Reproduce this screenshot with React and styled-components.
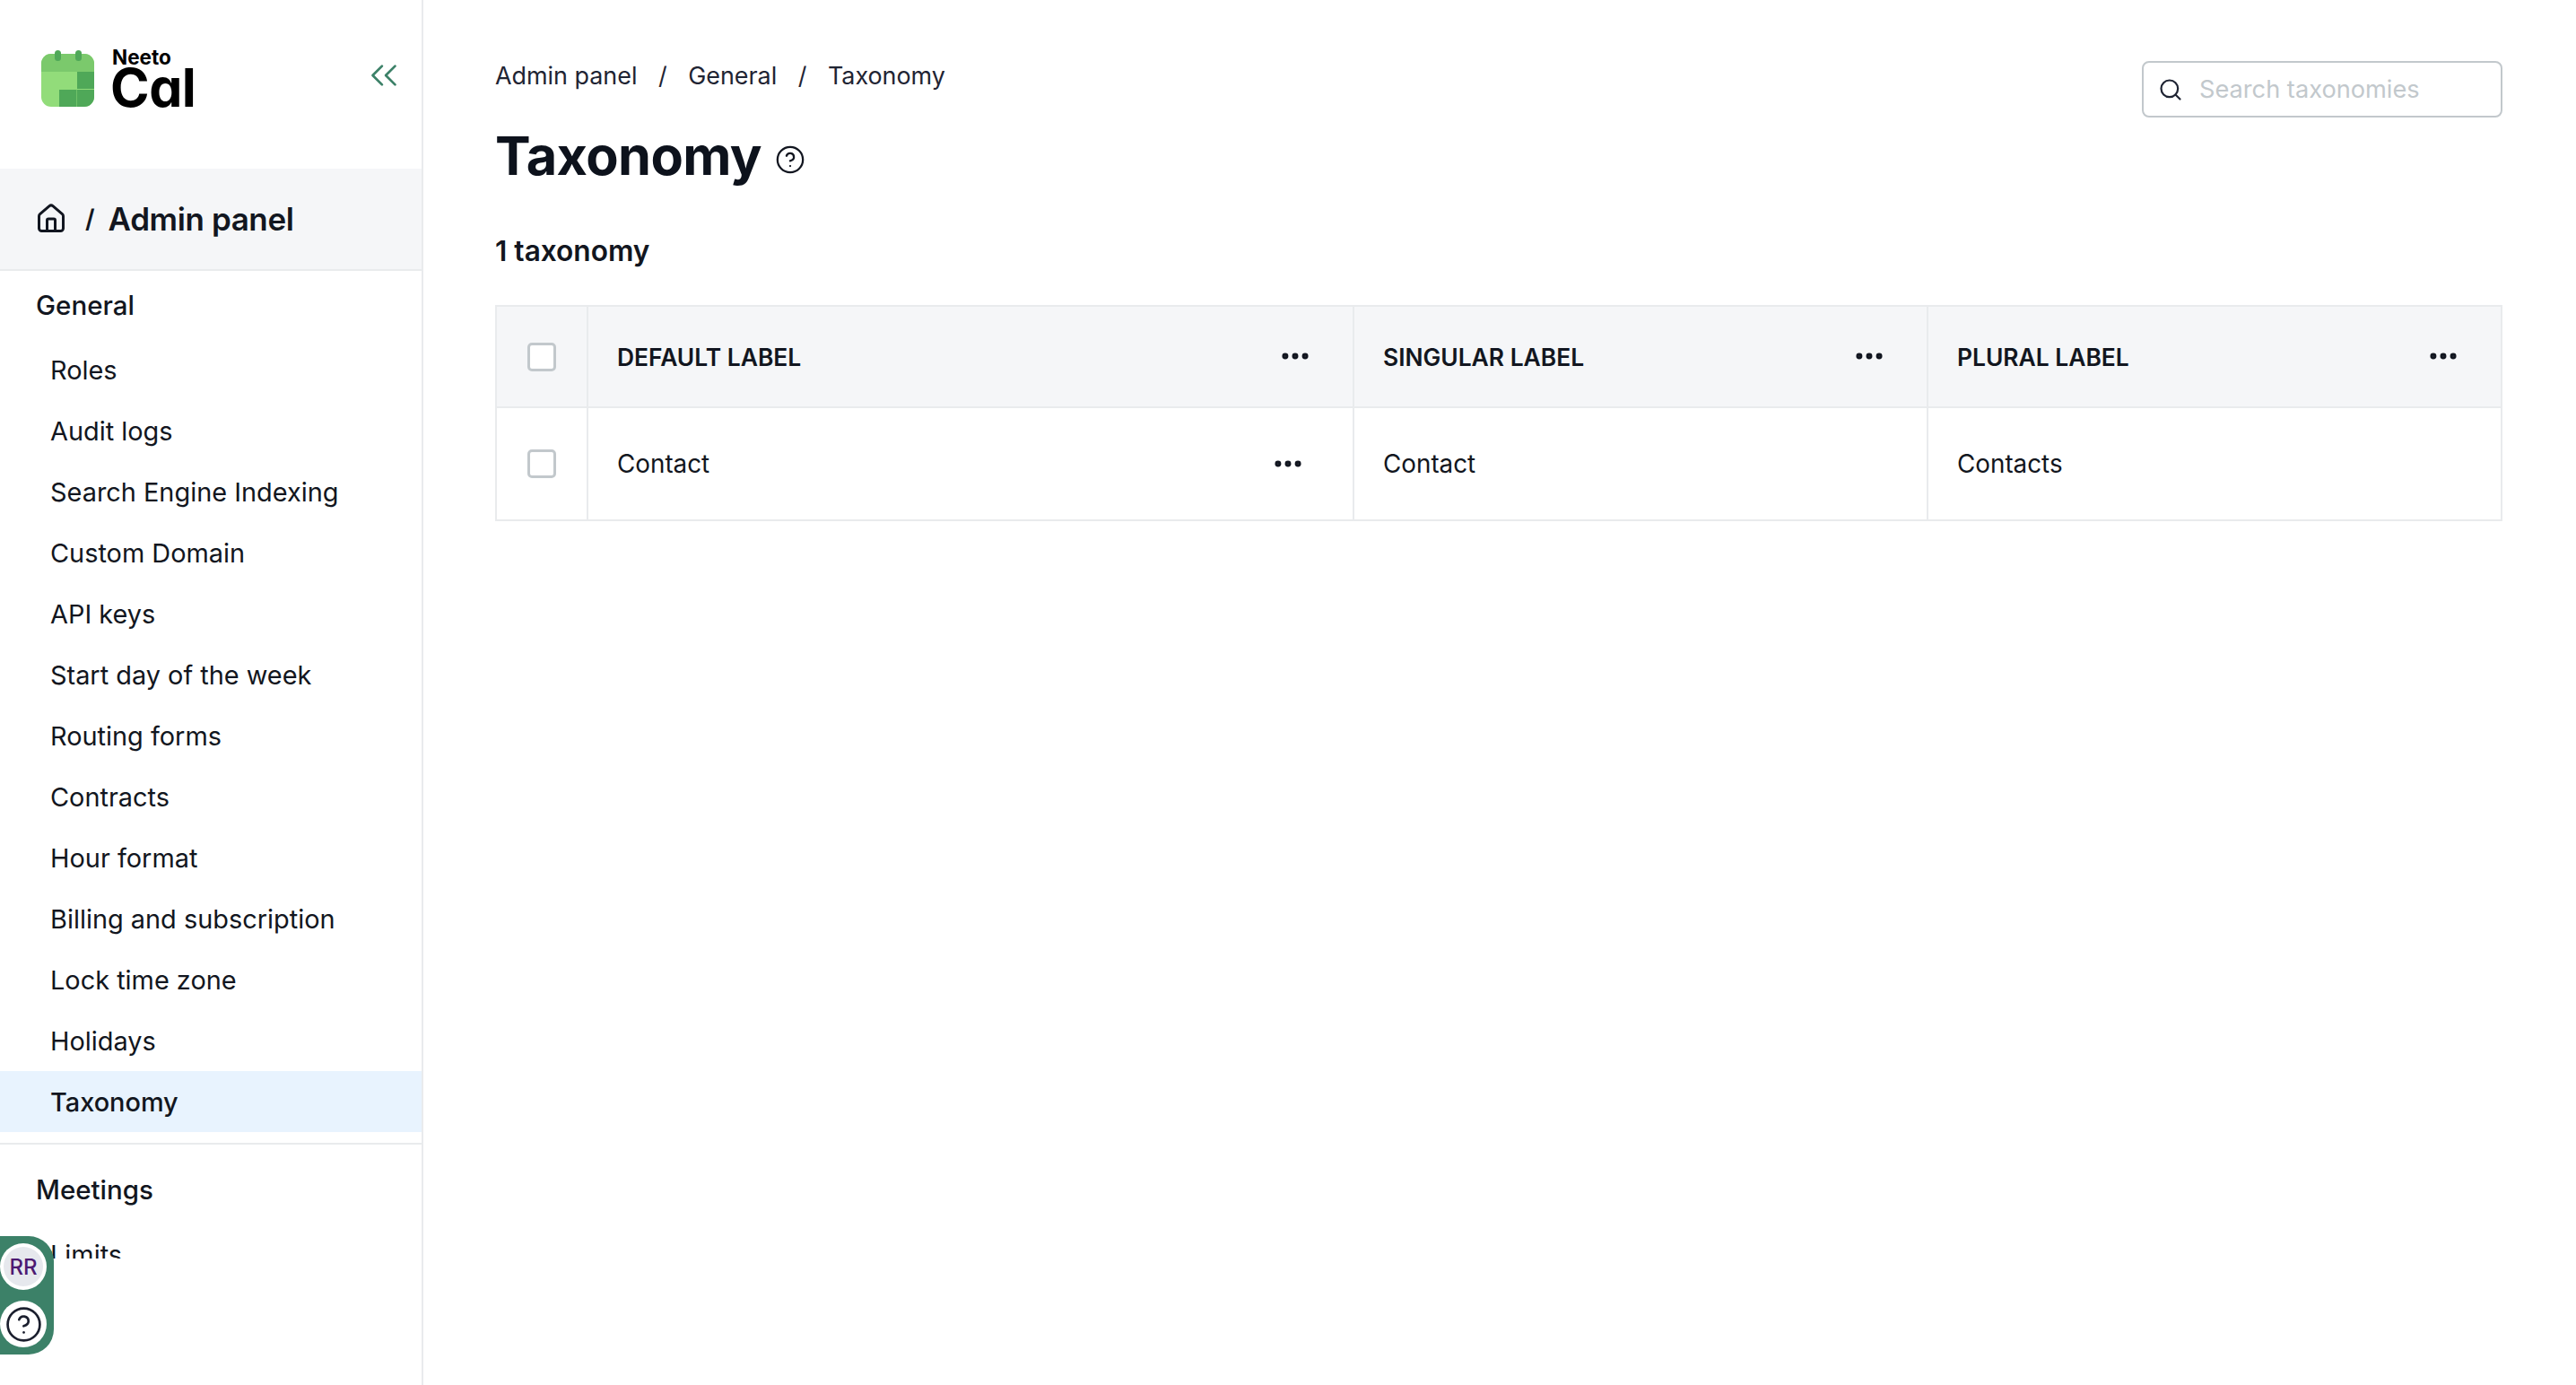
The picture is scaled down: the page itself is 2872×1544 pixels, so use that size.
import React from 'react';
import styled, { createGlobalStyle } from 'styled-components';
import { ChevronsLeft, CircleHelp, Ellipsis, House, Search } from 'lucide-react';

const GlobalStyle = createGlobalStyle`
  html, body {
    margin: 0;
    padding: 0;
    background: #fff;
  }
  * {
    box-sizing: border-box;
  }
  body {
    font-family: Inter, "Liberation Sans", sans-serif;
    color: #121620;
  }
`;

const generalItems = [
  'Roles',
  'Audit logs',
  'Search Engine Indexing',
  'Custom Domain',
  'API keys',
  'Start day of the week',
  'Routing forms',
  'Contracts',
  'Hour format',
  'Billing and subscription',
  'Lock time zone',
  'Holidays',
  'Taxonomy',
];

const Logo = () => (
  <LogoWrap>
    <svg width="59" height="63" viewBox="0 0 59 63">
      <defs>
        <clipPath id="calBody">
          <rect x="0" y="4" width="59" height="59" rx="11" />
        </clipPath>
      </defs>
      <g clipPath="url(#calBody)">
        <rect x="0" y="4" width="59" height="59" fill="#92dc7a" />
        <rect x="0" y="4" width="59" height="20" fill="#7bc96c" />
        <rect x="40" y="24" width="19" height="19" fill="#4fa858" />
        <rect x="20" y="44" width="19.5" height="19" fill="#4fa858" />
        <rect x="40" y="44" width="19" height="19" fill="#4fa858" />
      </g>
      <rect x="15" y="0" width="7" height="12" rx="3.5" fill="#4fa858" />
      <rect x="38" y="0" width="7" height="12" rx="3.5" fill="#4fa858" />
    </svg>
    <LogoText>
      <LogoSmall>Neeto</LogoSmall>
      <LogoBig>Cal</LogoBig>
    </LogoText>
  </LogoWrap>
);

const App = () => {
  return (
    <Page>
      <GlobalStyle />
      <Sidebar>
        <SideTop>
          <Logo />
          <Collapse>
            <ChevronsLeft size={50} strokeWidth={1.3} />
          </Collapse>
        </SideTop>
        <PanelBand>
          <House size={36} strokeWidth={2} />
          <Slash>/</Slash>
          <PanelTitle>Admin panel</PanelTitle>
        </PanelBand>
        <Menu>
          <SectionTitle>General</SectionTitle>
          {generalItems.map((item) => (
            <MenuItem key={item} $active={item === 'Taxonomy'}>
              {item}
            </MenuItem>
          ))}
          <Divider />
          <SectionTitle $second>Meetings</SectionTitle>
          <MenuItem>Limits</MenuItem>
        </Menu>
        <FloatPill>
          <Avatar>
            <AvatarInner>RR</AvatarInner>
          </Avatar>
          <Avatar>
            <CircleHelp size={43} strokeWidth={1.5} color="#1b1f2e" />
          </Avatar>
        </FloatPill>
      </Sidebar>
      <Main>
        <Header>
          <div>
            <Crumbs>
              <span>Admin panel</span>
              <CrumbSlash>/</CrumbSlash>
              <span>General</span>
              <CrumbSlash>/</CrumbSlash>
              <span>Taxonomy</span>
            </Crumbs>
            <TitleRow>
              <Title>Taxonomy</Title>
              <TitleHelp>
                <CircleHelp size={34} strokeWidth={1.6} />
              </TitleHelp>
            </TitleRow>
          </div>
          <SearchBox>
            <Search size={28} strokeWidth={1.9} color="#1f2433" />
            <SearchInput placeholder="Search taxonomies" readOnly />
          </SearchBox>
        </Header>
        <Count>1 taxonomy</Count>
        <Table>
          <HeadCell $check>
            <Checkbox />
          </HeadCell>
          <HeadCell>
            DEFAULT LABEL
            <Ellipsis size={38} strokeWidth={2.4} />
          </HeadCell>
          <HeadCell>
            SINGULAR LABEL
            <Ellipsis size={38} strokeWidth={2.4} />
          </HeadCell>
          <HeadCell>
            PLURAL LABEL
            <Ellipsis size={38} strokeWidth={2.4} />
          </HeadCell>
          <Cell $check>
            <Checkbox />
          </Cell>
          <Cell $menu>
            Contact
            <Ellipsis size={38} strokeWidth={2.4} />
          </Cell>
          <Cell>Contact</Cell>
          <Cell>Contacts</Cell>
        </Table>
      </Main>
    </Page>
  );
};

const Page = styled.div`
  display: flex;
  width: 2872px;
  height: 1544px;
  overflow: hidden;
`;

const Sidebar = styled.aside`
  position: relative;
  flex: 0 0 472px;
  height: 100%;
  border-right: 2px solid #e9ebed;
  display: flex;
  flex-direction: column;
`;

const SideTop = styled.div`
  height: 188px;
  padding: 56px 17px 0 46px;
  display: flex;
  align-items: flex-start;
  justify-content: space-between;
`;

const LogoWrap = styled.div`
  display: flex;
  gap: 20px;
`;

const LogoText = styled.div`
  display: flex;
  flex-direction: column;
  color: #000;
`;

const LogoSmall = styled.span`
  font-size: 22.5px;
  line-height: 16px;
  font-weight: 700;
`;

const LogoBig = styled.span`
  font-size: 59px;
  line-height: 52px;
  margin-left: -2px;
  font-weight: 700;
  font-feature-settings: 'cv11' 1;
  letter-spacing: -0.5px;
`;

const Collapse = styled.div`
  color: #3c8168;
  margin-top: 3px;
  line-height: 0;
`;

const PanelBand = styled.div`
  height: 114px;
  background: #f5f6f8;
  border-bottom: 2px solid #e9ebed;
  padding-left: 39px;
  display: flex;
  align-items: center;
`;

const Slash = styled.span`
  margin: 0 15px 0 20px;
  font-size: 28px;
  font-weight: 600;
`;

const PanelTitle = styled.span`
  font-size: 35px;
  font-weight: 600;
  letter-spacing: -0.4px;
`;

const Menu = styled.nav`
  height: 1101px;
  flex: 0 0 auto;
  overflow: hidden;
  padding-top: 16px;
  display: flex;
  flex-direction: column;
`;

const SectionTitle = styled.div`
  flex: none;
  padding-left: 40px;
  height: 44px;
  margin-top: ${(p) => (p.$second ? '28px' : '0')};
  margin-bottom: 16px;
  display: flex;
  align-items: center;
  font-size: 29.5px;
  font-weight: 500;
`;

const MenuItem = styled.div`
  flex: none;
  height: 68px;
  padding-left: 56px;
  display: flex;
  align-items: center;
  font-size: 28.9px;
  font-weight: ${(p) => (p.$active ? 500 : 400)};
  background: ${(p) => (p.$active ? '#e8f3fe' : 'transparent')};
`;

const Divider = styled.div`
  flex: none;
  height: 2px;
  margin-top: 12px;
  background: #e9ebed;
`;

const FloatPill = styled.div`
  position: absolute;
  left: 0;
  top: 1378px;
  width: 60px;
  height: 132px;
  background: #3c8168;
  border-radius: 0 28px 28px 0;
  padding: 8px 0;
  display: flex;
  flex-direction: column;
  justify-content: space-between;
  align-items: flex-start;
`;

const Avatar = styled.div`
  width: 52px;
  height: 52px;
  border-radius: 50%;
  background: #fff;
  display: flex;
  align-items: center;
  justify-content: center;
`;

const AvatarInner = styled.div`
  width: 44px;
  height: 44px;
  border-radius: 50%;
  background: #e6e8ed;
  color: #4c1a72;
  font-size: 24px;
  font-weight: 500;
  display: flex;
  align-items: center;
  justify-content: center;
`;

const Main = styled.main`
  flex: 1;
  padding: 0 82px 0 80px;
`;

const Header = styled.div`
  display: flex;
  justify-content: space-between;
  align-items: flex-start;
  height: 248px;
`;

const Crumbs = styled.div`
  margin-top: 65px;
  height: 38px;
  display: flex;
  align-items: center;
  font-size: 26.9px;
  color: #1f2433;
`;

const CrumbSlash = styled.span`
  margin: 0 23.5px;
`;

const TitleRow = styled.div`
  margin-top: 34px;
  display: flex;
  align-items: center;
  gap: 15px;
`;

const Title = styled.h1`
  margin: 0;
  font-size: 59.4px;
  line-height: 72px;
  font-weight: 700;
  letter-spacing: -0.6px;
  color: #0d121c;
`;

const TitleHelp = styled.span`
  display: flex;
  margin-top: 9px;
`;

const SearchBox = styled.div`
  margin-top: 68px;
  width: 402px;
  height: 63px;
  border: 2px solid #c2c8cc;
  border-radius: 8px;
  padding-left: 16px;
  display: flex;
  align-items: center;
  gap: 18px;
`;

const SearchInput = styled.input`
  flex: 1;
  min-width: 0;
  border: 0;
  outline: 0;
  padding: 0;
  background: transparent;
  font-family: Inter, "Liberation Sans", sans-serif;
  font-size: 27.2px;
  &::placeholder {
    color: #c2c8cc;
    opacity: 1;
  }
`;

const Count = styled.div`
  height: 92px;
  display: flex;
  align-items: flex-start;
  padding-top: 12px;
  font-size: 31.6px;
  font-weight: 600;
`;

const Table = styled.div`
  display: grid;
  grid-template-columns: 102px 854px 640px 1fr;
  grid-template-rows: 113px 124px;
  border: 2px solid #e9ebed;
`;

const HeadCell = styled.div`
  background: #f5f6f8;
  border-bottom: 2px solid #e9ebed;
  border-right: 2px solid #e9ebed;
  display: flex;
  align-items: center;
  justify-content: ${(p) => (p.$check ? 'center' : 'space-between')};
  padding: ${(p) => (p.$check ? '0' : '0 45px 0 32px')};
  font-size: 26.4px;
  font-weight: 600;
  &:nth-child(4) {
    border-right: 0;
  }
  svg {
    margin-top: -2px;
  }
`;

const Cell = styled.div`
  border-right: 2px solid #e9ebed;
  display: flex;
  align-items: center;
  justify-content: ${(p) => (p.$check ? 'center' : 'space-between')};
  padding: ${(p) => (p.$check ? '0' : p.$menu ? '0 53px 0 32px' : '0 32px')};
  font-size: 27.8px;
  &:last-child {
    border-right: 0;
  }
`;

const Checkbox = styled.span`
  display: block;
  width: 32px;
  height: 32px;
  border: 3px solid #c2c8cc;
  border-radius: 5px;
  background: #fff;
`;

export default App;
